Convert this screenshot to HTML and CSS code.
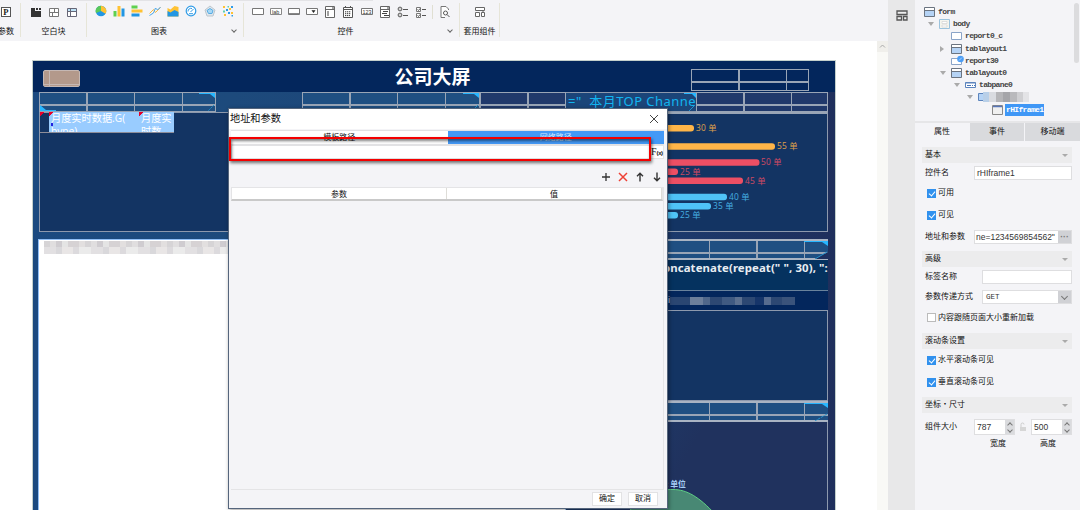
FILE: index.html
```
<!DOCTYPE html>
<html lang="zh-CN">
<head>
    <meta charset="UTF-8">
    <meta name="viewport" content="width=device-width, initial-scale=1.0">
    <title>公司大屏</title>
    <link rel="stylesheet" href="styles.css">
</head>
<body>
    <div class="app">
        <div class="workspace">
            <!-- toolbar -->
            <div class="toolbar">
                <div class="group g-param">
                    <div class="icons">
                        <svg width="12" height="12" viewBox="0 0 12 12"><rect x="1.5" y="1.5" width="9" height="9" fill="#fff" stroke="#555"/><text x="3.2" y="9.3" font-family="Liberation Serif" font-weight="bold" font-size="8.5" fill="#222">P</text></svg>
                    </div>
                    <div class="label"><span>参数</span></div>
                </div>
                <div class="group g-blank">
                    <div class="icons">
                        <svg width="12" height="12" viewBox="0 0 12 12"><path d="M1 2h4v3h6v6H1z" fill="#333"/><path d="M6 2h2v2H6zM9 2h2v2H9z" fill="#333"/></svg>
                        <svg width="12" height="12" viewBox="0 0 12 12"><path d="M1.500 2.500h9v8h-9zM1.500 6.500h9M6.500 2.500v4M4.500 6.500v4" fill="#fff" stroke="#777"/></svg>
                        <svg width="12" height="12" viewBox="0 0 12 12"><path d="M1.500 2.500h9v8h-9z" fill="#fff"/><path d="M2 3h8v2H2z" fill="#bfe3f7"/><path d="M1.500 2.500h9v8h-9zM1.500 5.500h9M4.500 2.500v8" fill="none" stroke="#667"/></svg>
                    </div>
                    <div class="label">空白块</div>
                </div>
                <div class="group g-chart">
                    <div class="icons">
                        <svg width="12" height="12" viewBox="0 0 12 12"><circle cx="6" cy="6" r="5.300" fill="#2196e3"/><path d="M6 6V.7A5.300 5.300 0 0 1 10.500 8.800z" fill="#ffc233"/><path d="M6 6V.7A5.300 5.300 0 0 0 1 8z" fill="#5ac85a"/></svg>
                        <svg width="12" height="12" viewBox="0 0 12 12"><path d="M.5 6h3v5.500h-3z" fill="#5fd04f"/><path d="M4.500 1h3v10.500h-3z" fill="#ffc233"/><path d="M8.500 3.500h3v8h-3z" fill="#2196e3"/></svg>
                        <svg width="12" height="12" viewBox="0 0 12 12"><path d="M.5.500h6v3h-6z" fill="#5fd04f"/><path d="M.5 4.500h11v3H.5z" fill="#ffc233"/><path d="M.5 8.500h8v3h-8z" fill="#2196e3"/></svg>
                        <svg width="12" height="12" viewBox="0 0 12 12"><path d="M.5 8.500l4-4 2 3 5-5" fill="none" stroke="#f5b942"/><path d="M.5 10.500l4-2.500 2-5 2 2 3-3" fill="none" stroke="#4aa6e8"/></svg>
                        <svg width="12" height="12" viewBox="0 0 12 12"><path d="M.5 3l3 1.500 4-3.500 4 1v9.500H.5z" fill="#ffc233"/><path d="M.5 6l3 1.500L7.500 5l4 2v4.500H.5z" fill="#2196e3"/></svg>
                        <svg width="12" height="12" viewBox="0 0 12 12"><circle cx="6" cy="6" r="4.800" fill="#fff" stroke="#2f9be6" stroke-width="1.200"/><path d="M3 6.500a3 3 0 0 1 4-3M5.500 7l3-3M4 8.700h4" fill="none" stroke="#2f9be6"/></svg>
                        <svg width="12" height="12" viewBox="0 0 12 12"><path d="M6 1l5 4-2 6H3L1 5z" fill="#dfe6ec" stroke="#bcc6ce"/><path d="M6 3.500l3 2-1 3H4.500L3 5.500z" fill="#a9d8f5" stroke="#57ace4"/></svg>
                        <svg width="12" height="12" viewBox="0 0 12 12"><path d="M1 1h2v2H1zM7 3h2v2H7zM2 9h2v2H2zM9 7h2v2H9z" fill="#ffc233"/><path d="M4 4h2v2H4zM9 1h2v2H9zM6 7h2v2H6zM9.500 10h1.500v1.500H9.500z" fill="#2f9be6"/><path d="M1 5.500h2v2H1zM5.500 1h1.500v1.500H5.500z" fill="#5fd0b0"/></svg>
                    </div>
                    <div class="label">图表<i class="chev"></i></div>
                </div>
                <div class="group g-widget">
                    <div class="icons">
                        <svg width="12" height="12" viewBox="0 0 12 12"><path d="M.5 2.500h11v6H.5z" fill="#fff" stroke="#777"/></svg>
                        <svg width="12" height="12" viewBox="0 0 12 12"><path d="M.5 2.500h11v6H.5z" fill="#fff" stroke="#888"/><text x="2" y="7.800" font-size="5.500" font-family="Liberation Sans" fill="#333">lab</text></svg>
                        <svg width="12" height="12" viewBox="0 0 12 12"><path d="M.5 2.500h11v6H.5z" fill="#fff" stroke="#777"/><path d="M1 7.500h10" stroke="#888"/></svg>
                        <svg width="12" height="12" viewBox="0 0 12 12"><path d="M.5 2.500h11v6H.5z" fill="#fff" stroke="#777"/><path d="M5.500 4.300h4L7.500 7z" fill="#222"/></svg>
                        <svg width="12" height="12" viewBox="0 0 12 12"><path d="M1.500 .500h9v11h-9zM1.500 3.500h9" fill="#fff" stroke="#666"/><path d="M4 5v5M8 2h2" stroke="#444"/></svg>
                        <svg width="12" height="12" viewBox="0 0 12 12"><path d="M1.500 1.500h9v10h-9zM1.500 3.500h9M3.500 0v2M8.500 0v2" fill="#fff" stroke="#555"/><path d="M3 5.800h6M3 7.700h6M3 9.600h5" stroke="#333" stroke-dasharray="1.300 .7"/></svg>
                        <svg width="12" height="12" viewBox="0 0 12 12"><path d="M.5 2.500h11v6H.5z" fill="#fff" stroke="#777"/><text x="1.500" y="7.700" font-size="5.400" font-family="Liberation Sans" fill="#333">123</text></svg>
                        <svg width="12" height="12" viewBox="0 0 12 12"><path d="M1.500 .500h9v11h-9zM1.500 3.500h9" fill="#fff" stroke="#666"/><path d="M4 5.500h5M3 7.500h5M5 9.500h5M8 2h2" stroke="#444"/></svg>
                        <svg width="12" height="12" viewBox="0 0 12 12"><circle cx="3" cy="3" r="1.900" fill="#fff" stroke="#555"/><circle cx="3" cy="9" r="1.900" fill="#fff" stroke="#555"/><path d="M2.500 3h1M2.500 9h1M6 3.500h5M6 9.500h5" stroke="#555"/></svg>
                        <svg width="12" height="12" viewBox="0 0 12 12"><path d="M1.500 1.500h4v4h-4zM1.500 7.500h4v4h-4z" fill="#fff" stroke="#777"/><path d="M2.500 3.500l1 1 1.500-2M2.500 9.500l1 1 1.500-2M7 3.500h4M7 9.500h4" fill="none" stroke="#555"/></svg>
                        <i class="divider"></i>
                        <svg width="12" height="12" viewBox="0 0 12 12"><path d="M9.500 4V3L7 .500H2v11h4" fill="#fff" stroke="#777"/><circle cx="6.500" cy="7" r="2" fill="#fff" stroke="#555"/><path d="M8 8.500l2.500 2.500" stroke="#555"/></svg>
                    </div>
                    <div class="label">控件<i class="chev"></i></div>
                </div>
                <div class="group g-suite">
                    <div class="icons">
                        <svg width="12" height="12" viewBox="0 0 12 12"><path d="M1.500 1.500h9v3h-9zM1.500 6.500h4v4h-4zM7.500 6.500h3v4h-3zM9 4.500v2" fill="#fff" stroke="#666"/></svg>
                    </div>
                    <div class="label">套用组件</div>
                </div>
            </div>

            <div class="canvas">
                <!-- dashboard being designed -->
                <div class="dash">
                    <div class="dash-head">
                        <span class="tan"></span>
                        <h1>公司大屏</h1>
                        <span class="strip plain head-strip"></span>
                    </div>
                    <div class="dash-body">
                        <div class="left-col">
                            <div class="strips">
                                <span class="strip">
                                    <svg class="corner" width="20" height="20" viewBox="0 0 20 20"><path d="M4 0h16v5l-5-4H4z" fill="#27b6ff"/><path d="M19 12l-6 6" stroke="#2490c8" stroke-dasharray="2 1"/></svg>
                                    <svg class="corner low" width="18" height="6" viewBox="0 0 18 6"><path d="M0 0l6 5h10v1H0z" fill="#27b6ff"/></svg>
                                </span>
                                <span class="strip">
                                    <svg class="corner" width="20" height="20" viewBox="0 0 20 20"><path d="M4 0h16v5l-5-4H4z" fill="#27b6ff"/><path d="M19 12l-6 6" stroke="#2490c8"/></svg>
                                </span>
                                <span class="strip plain"></span>
                            </div>
                            <div class="panel data-panel">
                                <div class="cells">
                                    <span class="cell-dark"></span>
                                    <span class="cell wide">月度实时数据.G(<br>bype)</span>
                                    <span class="cell">月度实<br>时数</span>
                                </div>
                            </div>
                            <div class="panel frame-panel"><div class="mosaic"></div></div>
                        </div>
                        <div class="right-col">
                            <div class="top-row">
                                <div class="top-title">="&nbsp; 本月TOP Channe
                                    <svg class="corner" width="20" height="20" viewBox="0 0 20 20"><path d="M8 0h12v5l-4-4H8z" fill="#27b6ff"/><path d="M19 12l-6 6" stroke="#2490c8"/></svg>
                                </div>
                                <span class="strip plain"></span>
                            </div>
                            <div class="panel bars">
                                <svg width="260" height="117" viewBox="567 114 260 117">
                                    <g fill="#ffb548">
                                        <rect x="597" y="125" width="97" height="6.500" rx="3"/><text x="696" y="131">30 单</text>
                                        <rect x="597" y="143.300" width="178" height="6.500" rx="3"/><text x="777" y="149.400">55 单</text>
                                    </g>
                                    <g fill="#ec4f64">
                                        <rect x="597" y="159.300" width="162.500" height="6.500" rx="3"/><text x="761" y="165.400">50 单</text>
                                        <rect x="597" y="168.500" width="81" height="6.500" rx="3"/><text x="680" y="174.600">25 单</text>
                                        <rect x="597" y="177.600" width="146" height="6.500" rx="3"/><text x="745" y="183.700">45 单</text>
                                    </g>
                                    <g fill="#4fc3f7">
                                        <rect x="597" y="193.700" width="130" height="6.500" rx="3"/><text x="729" y="199.800">40 单</text>
                                        <rect x="597" y="202.900" width="114" height="6.500" rx="3"/><text x="713" y="209">35 单</text>
                                        <rect x="597" y="212.100" width="81" height="6.500" rx="3"/><text x="680" y="218.200">25 单</text>
                                    </g>
                                </svg>
                            </div>
                            <span class="strip tall">
                                <svg class="corner" width="24" height="18" viewBox="0 0 24 18"><path d="M0 0h24v5l-6-4H0z" fill="#27b6ff"/><path d="M24 11l-13 7h13z" fill="#1d2f5e"/><path d="M23 11l-12 7" stroke="#2490c8"/></svg>
                            </span>
                            <div class="formula"><b>concatenate(repeat("</b> <b>", 30), ":</b><br>)</div>
                            <div class="masked"><span>i</span><i class="mosaic-dark"></i></div>
                            <div class="panel mid"></div>
                            <span class="strip tall">
                                <svg class="corner" width="24" height="18" viewBox="0 0 24 18"><path d="M0 0h24v5l-6-4H0z" fill="#27b6ff"/><path d="M23 11l-12 7" stroke="#2490c8" stroke-dasharray="3 1"/></svg>
                            </span>
                            <div class="panel pie">
                                <svg width="260" height="88" viewBox="567 422 260 88"><path d="M628 514C645 492 660 489.500 674 489.500S700 497 716 514z" fill="#488874" stroke="#5fcf85"/><text x="667" y="487">: 单位</text></svg>
                            </div>
                        </div>
                    </div>
                </div>
                <div class="vscroll"><svg width="11" height="10" viewBox="0 0 11 10"><path d="M3 6.500l2.500-2.500L8 6.500" fill="none" stroke="#aaa"/></svg></div>
            </div>

            <!-- dialog -->
            <div class="dialog">
                <div class="dialog-title">地址和参数
                    <svg width="10" height="10" viewBox="0 0 10 10"><path d="M1 1l8 8M9 1L1 9" stroke="#444"/></svg>
                </div>
                <div class="dialog-body">
                    <div class="dtabs"><span>模板路径</span><span class="on">网络路径</span></div>
                    <div class="path-row"><div class="path-input"></div><div class="fx">F<small>(x)</small></div></div>
                    <div class="mark"></div>
                    <div class="tools">
                        <svg width="10" height="10" viewBox="0 0 10 10"><path d="M5 1v8M1 5h8" stroke="#333" stroke-width="1.300"/></svg>
                        <svg width="10" height="10" viewBox="0 0 10 10"><path d="M1 1l8 8M9 1L1 9" stroke="#ee4035" stroke-width="1.500"/></svg>
                        <svg width="10" height="10" viewBox="0 0 10 10"><path d="M5 9.500V1.500M2 4.300l3-3 3 3" fill="none" stroke="#333" stroke-width="1.400"/></svg>
                        <svg width="10" height="10" viewBox="0 0 10 10"><path d="M5 .500v8M2 5.700l3 3 3-3" fill="none" stroke="#333" stroke-width="1.400"/></svg>
                    </div>
                    <div class="params">
                        <div class="params-head"><span>参数</span><span>值</span></div>
                    </div>
                    <div class="actions"><button>确定</button><button>取消</button></div>
                </div>
            </div>
        </div>

        <div class="rail">
            <div class="rail-btn"><svg width="12" height="11" viewBox="0 0 12 11"><path d="M1 1h10v3.500H1zM1 6.500h4.500V10H1zM7.500 6.500H11V10H7.500z" fill="#eee" stroke="#555" stroke-width="1.300"/></svg></div>
        </div>

        <!-- component tree and attributes -->
        <div class="side">
            <div class="tree">
                <div class="node l0"><svg class="ico" viewBox="0 0 11 10"><path d="M.5.500h10v9H.5z" fill="#b5d3f5" stroke="#6b7480"/><path d="M1 1h9v2H1z" fill="#fff"/><path d="M1 3.500h9" stroke="#6b7480"/></svg>form</div>
                <div class="node l1"><i class="down"></i><svg class="ico" viewBox="0 0 11 10"><path d="M.5.500h10v9H.5z" fill="#f5f5ee" stroke="#9cc3dd"/><path d="M3 2.500h5v2H3zM3 6h5v2H3z" fill="#fff" stroke="#ccc" stroke-width=".6"/></svg>body</div>
                <div class="node l2"><svg class="ico" viewBox="0 0 11 10"><path d="M.5 1.500h10v7H.5z" fill="#fff" stroke="#8aa4c8"/></svg>report0_c</div>
                <div class="node l2"><i class="right"></i><svg class="ico" viewBox="0 0 11 10"><path d="M.5.500h10v9H.5z" fill="#b5d3f5" stroke="#6b7480"/><path d="M1 1h9v2H1z" fill="#fff"/><path d="M1 3.500h9" stroke="#6b7480"/></svg>tablayout1</div>
                <div class="node l2"><svg class="ico" viewBox="0 0 11 10"><path d="M.5 2.500h10v6H.5z" fill="#fff" stroke="#8aa4c8"/><circle cx="9.500" cy="3" r="3.300" fill="#4a9df5"/><path d="M8 4.500L11 1.500" stroke="#d5e9ff" stroke-width=".7"/></svg>report30</div>
                <div class="node l2"><i class="down"></i><svg class="ico" viewBox="0 0 11 10"><path d="M.5.500h10v9H.5z" fill="#b5d3f5" stroke="#6b7480"/><path d="M1 1h9v2H1z" fill="#fff"/><path d="M1 3.500h9" stroke="#6b7480"/></svg>tablayout0</div>
                <div class="node l3"><i class="down"></i><svg class="ico" viewBox="0 0 11 10"><path d="M.5 2.500h10v5H.5z" fill="#fff" stroke="#5c84bd"/><path d="M.5 3h10" stroke="#5c84bd"/><path d="M2 5.500h4M7 5.500h1M9 5.500h1" stroke="#4775b8"/></svg>tabpane0</div>
                <div class="node l4"><i class="down"></i><svg class="ico" viewBox="0 0 11 10"><path d="M.5 1.500h10v7H.5z" fill="#b5d3f5" stroke="#5c84bd"/></svg><span class="tree-mosaic"></span></div>
                <div class="node l5"><svg class="ico" viewBox="0 0 11 10"><path d="M.5.500h10v9H.5z" fill="#f0f0f0" stroke="#888"/><path d="M1 1.500h9" stroke="#5876b8" stroke-width="1.500"/></svg><span class="picked">rHIframe1</span></div>
                <div class="tree-scroll"></div>
            </div>
            <div class="tabs"><span class="active">属性</span><span>事件</span><span>移动端</span></div>
            <div class="attrs">
                <div class="sec">基本</div>
                <div class="row">控件名<div class="field w98">rHIframe1</div></div>
                <div class="check"><i class="box on"></i>可用</div>
                <div class="check"><i class="box on"></i>可见</div>
                <div class="row r22">地址和参数<div class="field w98 cut">ne=1234569854562"<b class="more">···</b></div></div>
                <div class="sec s2">高级</div>
                <div class="row r20">标签名称<div class="field w90"></div></div>
                <div class="row">参数传递方式<div class="field w90 mono">GET<b class="drop"></b></div></div>
                <div class="check c21"><i class="box"></i>内容跟随页面大小重新加载</div>
                <div class="sec s3">滚动条设置</div>
                <div class="check"><i class="box on"></i>水平滚动条可见</div>
                <div class="check"><i class="box on"></i>垂直滚动条可见</div>
                <div class="sec s4">坐标・尺寸</div>
                <div class="row size">组件大小
                    <div class="sizes">
                        <div class="field spin">787<b><i></i><i></i></b></div>
                        <svg width="8" height="10" viewBox="0 0 8 10"><path d="M2 5V2.500a1.500 1.500 0 0 1 3 0" fill="none" stroke="#ccc"/><path d="M1 5h6v4H1z" fill="#d6d6d6"/></svg>
                        <div class="field spin">500<b><i></i><i></i></b></div>
                    </div>
                </div>
                <div class="size-labels"><span>宽度</span><span>高度</span></div>
            </div>
        </div>
    </div>
</body>
</html>
```
FILE: styles.css
```
* {
    box-sizing: border-box;
}

body {
    margin: 0;
    font-family: "Liberation Sans", "Noto Sans CJK SC", sans-serif;
    font-size: 8px;
    line-height: 1;
    color: #111;
    background-color: #fff;
}

svg {
    display: block;
    flex: none;
}

.app {
    display: flex;
    width: 1080px;
    height: 510px;
    overflow: hidden;
}

.workspace {
    position: relative;
    width: 888px;
    display: flex;
    flex-direction: column;
}

/* toolbar */
.toolbar {
    display: flex;
    height: 41px;
    flex: none;
    padding-top: 3px;
    background: linear-gradient(#e3e3e6, #e3e3e6) 32px 0 / 341px 1px no-repeat #f4f4f7;
}

.group {
    height: 34px;
    border-right: 1px solid #e6e5d8;
    padding-top: 3px;
}

.icons {
    display: flex;
    gap: 6.1px;
    height: 12px;
}

.label {
    position: relative;
    height: 14px;
    margin-top: 6px;
    line-height: 16px;
    text-align: center;
}

.g-param { width: 21px; }
.g-param .label { display: flex; }
.g-param .label span { margin-left: -2px; }
.g-blank { width: 66px; padding-left: 9px; }
.g-blank .label { padding-right: 9px; }
.g-chart { width: 157px; padding-left: 8px; }
.g-chart .icons { margin-top: -1px; }
.g-chart .label { margin-top: 7px; padding-right: 20px; }
.g-widget { width: 216px; padding-left: 8px; }
.g-widget .label { padding-right: 20px; }
.g-suite { width: 40px; }
.g-suite .icons { justify-content: center; }

.divider {
    width: 1px;
    height: 14px;
    margin: -1px -1px 0 -.5px;
    background-color: #e0dfd2;
}

.chev {
    position: absolute;
    right: 7px;
    top: 4px;
    width: 4px;
    height: 4px;
    border: solid #666;
    border-width: 0 1px 1px 0;
    transform: rotate(45deg);
}

/* dashboard */
.canvas {
    flex: 1;
    display: flex;
    justify-content: space-between;
    background-color: #fff;
    overflow: hidden;
}

.dash {
    width: 804px;
    margin: 19px 0 0 32px;
    border: solid #c4d0cc;
    border-width: 1px 1px 0 1px;
    background: linear-gradient(90deg, #1b4a80 0%, #1d4a7c 25%, #1a3f74 70%, #1f2f5c 100%);
}

.dash-head {
    display: flex;
    justify-content: space-between;
    height: 31px;
    padding: 8px 26px 0 10px;
    background-color: #03265c;
}

.dash-head h1 {
    margin: -5px 0 0 94px;
    font-size: 19px;
    line-height: 24px;
    font-weight: bold;
    font-family: "Noto Sans CJK SC", sans-serif;
    color: #fff;
}

.tan {
    width: 37px;
    height: 17px;
    margin-top: 1px;
    border: 1px solid #c5b8b4;
    border-radius: 2px;
    background: linear-gradient(90deg, transparent 5px, #c5b8b4 5px, #c5b8b4 6px, transparent 6px), linear-gradient(#b3998b 13px, #c5b8b4 13px, #c5b8b4 14px, #b3998b 14px);
}

.strip {
    position: relative;
    display: block;
    height: 20px;
    border: 1px solid #99a5b6;
    background:
        linear-gradient(transparent 11px, #99a5b6 11px, #99a5b6 13px, transparent 13px),
        repeating-linear-gradient(90deg, transparent 0, transparent 46.2px, #99a5b6 46.2px, #99a5b6 47.7px),
        #1f4f82;
}

.strip.plain {
    background-color: #20396b;
}

.head-strip.strip {
    width: 118px;
    height: 22px;
    background-color: #03265c;
}

.strip.tall {
    height: 21px;
    border-width: 2px 0 2px 1px;
    border-color: #a9b4c3;
}

.corner {
    position: absolute;
    top: 0;
    right: 0;
}

.corner.low {
    top: auto;
    right: auto;
    bottom: 0;
    left: 0;
}

.dash-body {
    display: flex;
    padding: 0 8px 0 6px;
}

.left-col {
    width: 527px;
}

.right-col {
    width: 262px;
}

.strips {
    display: flex;
    height: 20px;
}

.strips .strip:nth-child(1) { width: 177px; margin-right: 86px; }
.strips .strip:nth-child(2) { width: 178px; }
.strips .strip:nth-child(3) { width: 86px; }

.panel {
    border: 1px solid #8d99ad;
    background-color: #133463;
}

.data-panel {
    height: 120px;
}

.cells {
    display: flex;
    width: 134px;
    height: 21px;
    margin-top: -1px;
    border-bottom: 1px solid #8d8d99;
    overflow: hidden;
}

.cell-dark {
    width: 9px;
    background: linear-gradient(135deg, #e8002a 3px, transparent 3px);
}

.cell {
    flex: 1;
    padding: 0 0 0 2px;
    font-family: "Open Sans", "Noto Sans CJK SC", sans-serif;
    font-size: 10.2px;
    line-height: 13px;
    color: #fff;
    white-space: nowrap;
    background: linear-gradient(135deg, #e8002a 3px, transparent 3px), #99ccff;
}

.cell.wide {
    flex: none;
    width: 90px;
    background: linear-gradient(135deg, #e8002a 3px, transparent 3px), linear-gradient(#2222e0, #2222e0) 2px 11px / 2px 3px no-repeat, #99ccff;
}

.frame-panel {
    height: 280px;
    margin: 7px 0 0 -1px;
    padding: 1px 1px 0 5px;
    border: 1px solid #8fbef5;
    background-color: #fff;
}

.mosaic {
    height: 13px;
    background:
        repeating-linear-gradient(90deg, #d6d4d6 0, #d6d4d6 6px, #e0dedf 6px, #e0dedf 12px, #cfccd0 12px, #cfccd0 18px, #e4e4e4 18px, #e4e4e4 24px, #d6d2d4 24px, #d6d2d4 35px, #e2dfdf 35px, #e2dfdf 41px) 0 0 / 100% 6px no-repeat,
        repeating-linear-gradient(90deg, #e2e0e2 0, #e2e0e2 12px, #d9d8db 12px, #d9d8db 18px, #e9e6e6 18px, #e9e6e6 29px, #dcdadd 29px, #dcdadd 35px, #ebebeb 35px, #ebebeb 47px) 0 6px / 100% 7px no-repeat;
}

.top-row {
    display: flex;
    height: 20px;
}

.top-title {
    position: relative;
    width: 130px;
    padding-left: 2px;
    border-top: 1px solid #8d99ad;
    border-bottom: 1px solid #8d99ad;
    font-family: "Noto Sans", "Noto Sans CJK SC", sans-serif;
    font-size: 13px;
    letter-spacing: .45px;
    line-height: 17px;
    color: #12b5f0;
    white-space: nowrap;
    overflow: hidden;
    background-color: #1b4579;
}

.top-row .strip {
    flex: 1;
}

.bars {
    height: 120px;
    border-top: 2px solid #99a5b6;
}

.bars text {
    font-family: "Open Sans", "Noto Sans CJK SC", sans-serif;
    font-size: 8.4px;
    letter-spacing: .2px;
    opacity: .85;
}

.right-col > .tall {
    margin-top: 7px;
}

.formula {
    height: 31px;
    padding: 0 0 0 91px;
    font-family: "Noto Sans", sans-serif;
    font-size: 11.4px;
    letter-spacing: .1px;
    line-height: 15px;
    color: #e8edf2;
    white-space: nowrap;
    overflow: hidden;
    background-color: #05325f;
    border-bottom: 1px solid #69829c;
}

.masked {
    display: flex;
    align-items: center;
    height: 19px;
    padding-left: 102px;
    font-size: 9px;
    color: #c8d2de;
    background-color: #03265c;
}

.mosaic-dark {
    width: 125px;
    height: 8px;
    background: linear-gradient(90deg, #2a4672 0 20px, #6d7f9b 20px 33px, #50678a 33px 40px, #2d4873 40px 52px, #405a82 52px 65px, #5c7090 65px 72px, #2d4873 72px 85px, #16356a 85px 94px, #576c8f 94px 101px, #2d4873 101px 112px, #3a537b 112px);
}

.mid {
    height: 91px;
}

.right-col > .mid + .tall {
    margin-top: 0;
}

.pie {
    height: 90px;
    border-width: 0 1px 0 0;
    background: linear-gradient(120deg, #1d3f70 0%, #20325e 45%);
}

.pie text {
    font-family: "Noto Sans CJK SC", sans-serif;
    font-size: 7.8px;
    font-weight: bold;
    fill: #a5cdf5;
}

.vscroll {
    width: 11px;
    background: linear-gradient(#f0efeb 11px, #f9f9f6 11px);
}

/* dialog */
.dialog {
    position: absolute;
    left: 228px;
    top: 108px;
    width: 440px;
    height: 401px;
    display: flex;
    flex-direction: column;
    border: 1px solid #55657c;
    background-color: #f4f4f7;
    box-shadow: 1px 1px 4px rgba(0, 0, 0, 0.4);
}

.dialog-title {
    display: flex;
    justify-content: space-between;
    align-items: center;
    height: 20px;
    padding: 0 8px 0 1px;
    font-size: 10.2px;
    background-color: #fff;
}

.dialog-body {
    position: relative;
    padding: 1px 3px 0 2px;
}

.dtabs {
    display: flex;
    height: 15px;
    border: 1px solid #e2e2e4;
    border-width: 1px 0;
}

.dtabs span {
    flex: 1;
    text-align: center;
    line-height: 14px;
    background-color: #fff;
}

.dtabs .on {
    color: #d5e9ff;
    background-color: #4499f6;
}

.path-row {
    display: flex;
    height: 14px;
}

.path-input {
    flex: 1;
    border: 1px solid #e2e2e4;
    background-color: #fff;
}

.fx {
    width: 14px;
    padding-left: 1px;
    font: 10px/12px "Liberation Serif", serif;
    background-color: #fff;
    border: 1px solid #e6e6e6;
    border-left: none;
    white-space: nowrap;
}

.fx small {
    font: bold 6px "Liberation Sans", sans-serif;
    letter-spacing: -.4px;
}

/* red outline lying over the path field */
.mark {
    position: absolute;
    left: 0;
    top: 8px;
    width: 422px;
    height: 24px;
    border: 2px solid #f40000;
    box-shadow: 1px 2px 3px rgba(0, 0, 0, 0.55), inset 1px 2px 3px rgba(0, 0, 0, 0.5);
}

.tools {
    display: flex;
    justify-content: flex-end;
    gap: 7px;
    height: 28px;
    padding: 13px 2px 0 0;
}

.params {
    height: 303px;
    border: solid #e4e4e6;
    border-width: 0 1px 1px 0;
}

.params-head {
    display: flex;
    height: 14px;
    border: 1px solid #e4e4e6;
    border-bottom: 2px solid #c9c9c9;
    background-color: #fff;
}

.params-head span {
    flex: 1;
    text-align: center;
    line-height: 13px;
    border-right: 1px solid #deddd8;
}

.actions {
    display: flex;
    justify-content: flex-end;
    gap: 6px;
    padding: 2px 6px 0 0;
}

.actions button {
    width: 30px;
    height: 14px;
    padding: 0;
    border: 1px solid #e2e2e4;
    font: inherit;
    color: #111;
    background-color: #fff;
}

/* right side */
.rail {
    width: 27px;
    background-color: #e8e8e9;
}

.rail-btn {
    display: flex;
    height: 31px;
    justify-content: center;
    align-items: center;
}

.side {
    width: 165px;
    background-color: #f4f4f7;
}

.tree {
    position: relative;
    height: 123px;
    padding-top: 6px;
    border-bottom: 2px solid #e6e6e8;
    font-family: "Liberation Mono", monospace;
    font-size: 8px;
    font-weight: bold;
    letter-spacing: -.65px;
    color: #444;
}

.node {
    position: relative;
    display: flex;
    align-items: center;
    gap: 3px;
    height: 12.2px;
}

.ico {
    width: 11px;
    height: 10px;
    overflow: visible;
}

.l0 { padding-left: 9px; }
.l1 { padding-left: 24px; }
.l2 { padding-left: 36px; }
.l3 { padding-left: 50px; }
.l4 { padding-left: 63px; }
.l5 { padding-left: 77px; }

/* arrows hang in the indent, before the icon */
.down, .right {
    width: 0;
    height: 0;
    margin: 0 2px 0 -11px;
    border: 3px solid transparent;
}

.down {
    border-top: 4px solid #aaa;
    border-bottom-width: 0;
}

.right {
    margin-right: 4px;
    border-left: 4px solid #aaa;
    border-right-width: 0;
}

.picked {
    height: 12px;
    margin-left: -1px;
    padding: 0 1px;
    line-height: 12px;
    color: #fff;
    background-color: #3f97f6;
}

.tree-mosaic {
    width: 46px;
    height: 10px;
    margin-left: -9px;
    background: linear-gradient(90deg, #b8cfe8 0 6px, #d9dbe0 6px 13px, #b5b5b8 13px 20px, #a5a5a9 20px 27px, #b9b9bc 27px 34px, #cfcfd2 34px 40px, #e3e3e6 40px);
}

.tree-scroll {
    position: absolute;
    right: 1px;
    top: 3px;
    width: 5px;
    height: 60px;
    border-radius: 3px;
    background-color: #dcdcde;
}

.tabs {
    display: grid;
    grid-template-columns: 54px 54px 55px;
    gap: 1px;
    height: 17px;
}

.tabs span {
    text-align: center;
    line-height: 18px;
    background-color: #d9dadd;
}

.tabs .active {
    background-color: #f4f4f7;
}

.attrs {
    padding: 7px 8px 0 7px;
}

.sec {
    display: flex;
    align-items: center;
    justify-content: space-between;
    height: 16px;
    padding: 0 4px 0 3px;
    background-color: #ececed;
}

.sec::after {
    content: "";
    border: 3px solid transparent;
    border-top: 3px solid #aaa;
    border-bottom-width: 0;
}

.s2 { margin-top: 3px; }
.s3, .s4 { margin-top: 4px; }

.row {
    display: flex;
    align-items: center;
    justify-content: space-between;
    height: 19px;
    padding-left: 3px;
    white-space: nowrap;
}

.r20 { height: 20px; }
.r22 { height: 22px; }

.check {
    display: flex;
    align-items: center;
    gap: 2px;
    height: 22px;
    padding-left: 5px;
}

.c21 { height: 23px; }

.box {
    display: flex;
    width: 9px;
    height: 9px;
    border: 1px solid #bbb;
    background-color: #fff;
}

.box.on {
    border-color: #3191ee;
    background-color: #3191ee;
}

.box.on::after {
    content: "";
    width: 3px;
    height: 5px;
    margin: 0 0 0 2px;
    border: solid #fff;
    border-width: 0 1px 1px 0;
    transform: rotate(40deg);
}

.field {
    display: flex;
    justify-content: space-between;
    height: 14px;
    padding-left: 2px;
    border: 1px solid #dedee0;
    font-size: 8.5px;
    line-height: 13px;
    color: #333;
    background-color: #fff;
}

.w98 { width: 98px; }
.w90 { width: 90px; }

.cut {
    padding-left: 1px;
}

.mono {
    padding-left: 3px;
    font-family: "Liberation Mono", monospace;
    font-size: 7.5px;
}

.more, .drop {
    width: 13px;
    text-align: center;
    background-color: #d0d1d5;
}

.more {
    color: #777;
}

.drop::after {
    content: "";
    display: block;
    width: 4px;
    height: 4px;
    margin: 3px 0 0 4px;
    border: solid #777;
    border-width: 0 1px 1px 0;
    transform: rotate(45deg);
}

.size {
    height: 22px;
    margin-top: 3px;
}

.sizes {
    display: flex;
    align-items: center;
    justify-content: space-between;
    width: 98px;
}

.spin {
    width: 41px;
    height: 16px;
    line-height: 14px;
}

.spin b {
    display: flex;
    flex-direction: column;
    justify-content: space-around;
    align-items: center;
    width: 9px;
    background-color: #dadbde;
}

.spin i {
    width: 4px;
    height: 4px;
    border: solid #777;
    border-width: 1px 0 0 1px;
    transform: translateY(1px) rotate(45deg);
}

.spin i + i {
    transform: translateY(-1px) rotate(225deg);
}

.size-labels {
    display: flex;
    gap: 34px;
    padding-left: 68px;
    line-height: 12px;
}
```
